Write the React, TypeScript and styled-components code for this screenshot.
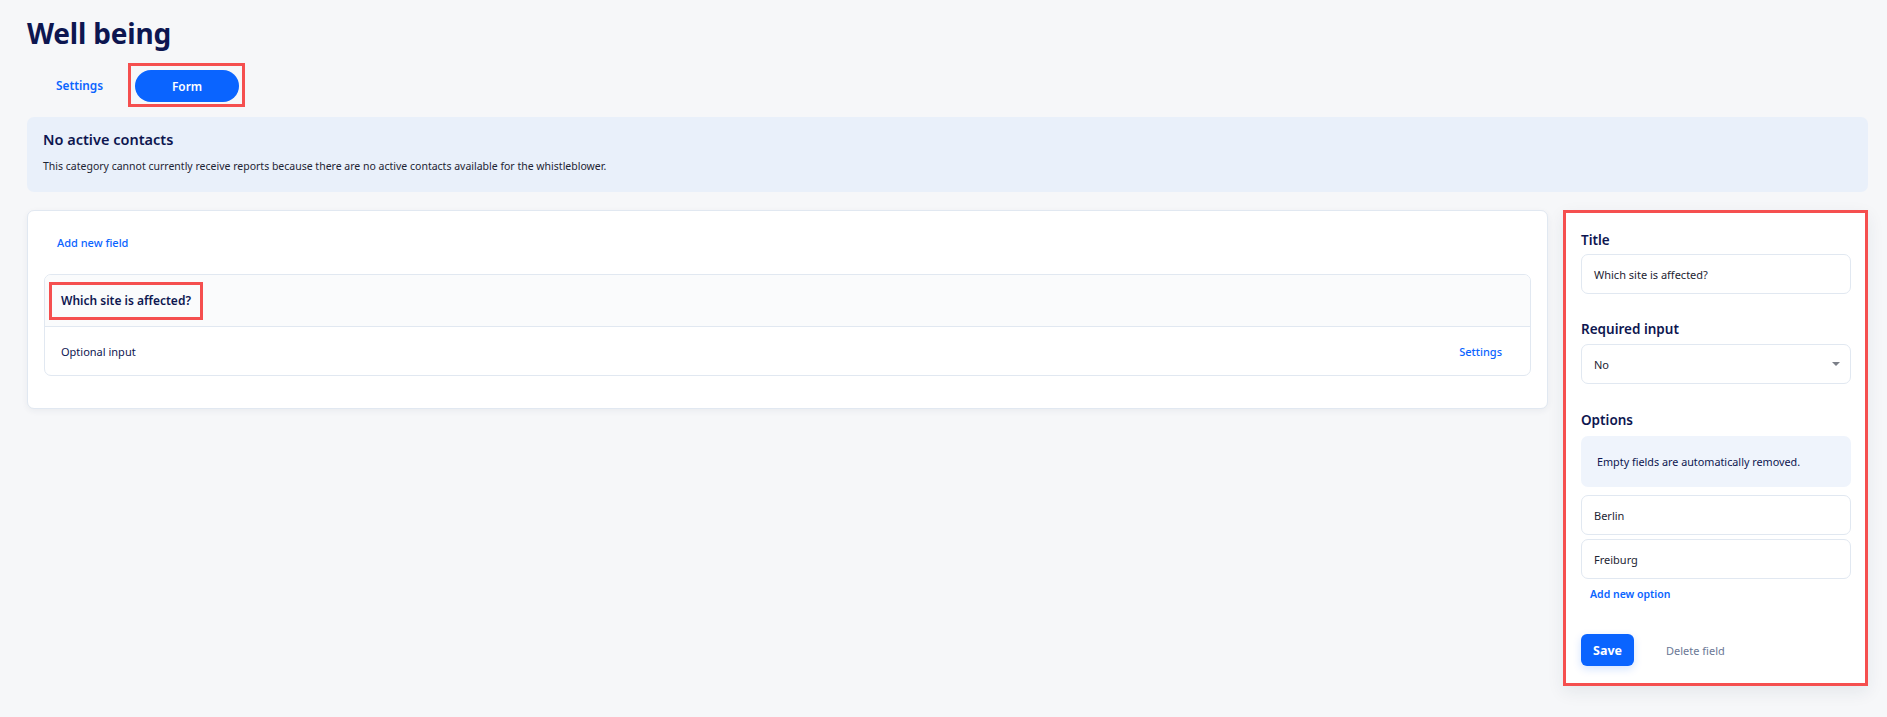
import React from "react";
import styled, { createGlobalStyle } from "styled-components";

const blue = "#0a64ff";
const navy = "#0d1650";
const border = "#e1e8f1";
const red = "#f54f4f";

const GlobalStyle = createGlobalStyle`
  * { box-sizing: border-box; }
  body {
    margin: 0;
    background: #f6f7f9;
    font-family: "Noto Sans", "Open Sans", Arial, sans-serif;
    color: #1d2433;
  }
`;

const Page = styled.div`
  padding: 0 19px 0 27px;
  min-height: 717px;
`;

const Title = styled.h1`
  margin: 15px 0 0;
  font-size: 28px;
  line-height: 36px;
  font-weight: 700;
  color: ${navy};
  letter-spacing: -0.2px;
`;

const Tabs = styled.div`
  display: flex;
  align-items: center;
  margin: 12px 0 0 4px;
`;

const Tab = styled.button<{ $active?: boolean }>`
  height: 32px;
  padding: 0 ${(p) => (p.$active ? "0" : "25px")};
  width: ${(p) => (p.$active ? "104px" : "auto")};
  border: 0;
  border-radius: 16px;
  background: ${(p) => (p.$active ? blue : "transparent")};
  color: ${(p) => (p.$active ? "#fff" : blue)};
  font-family: inherit;
  font-size: 11.8px;
  font-weight: 600;
  cursor: pointer;
`;

const Highlight = styled.span<{ $pad?: string }>`
  display: inline-flex;
  border: 3px solid ${red};
  padding: ${(p) => p.$pad || "4px"};
`;

const Alert = styled.div`
  margin-top: 10px;
  background: #e9f0fa;
  border-radius: 7px;
  padding: 12px 16px 18px;
`;

const AlertTitle = styled.div`
  font-size: 14.5px;
  line-height: 20px;
  font-weight: 600;
  color: ${navy};
`;

const AlertText = styled.div`
  margin-top: 9px;
  font-size: 10.5px;
  line-height: 16px;
  color: #1d2433;
`;

const Content = styled.div`
  display: flex;
  align-items: flex-start;
  gap: 15px;
  margin-top: 18px;
`;

const Card = styled.div`
  flex: 1;
  background: #fff;
  border: 1px solid ${border};
  border-radius: 7px;
  box-shadow: 0 2px 6px rgba(30, 45, 80, 0.06);
  padding: 15px 16px 32px;
`;

const LinkButton = styled.button<{ $size?: number }>`
  border: 0;
  background: none;
  color: ${blue};
  font-family: inherit;
  font-size: ${(p) => p.$size || 11}px;
  font-weight: 500;
  padding: 0 13px;
  height: 32px;
  cursor: pointer;
`;

const FieldBox = styled.div`
  margin-top: 16px;
  border: 1px solid ${border};
  border-radius: 7px;
  overflow: hidden;
`;

const FieldHeader = styled.div`
  background: #fafbfc;
  border-bottom: 1px solid ${border};
  padding: 7px 0 6px 4px;
  display: flex;
`;

const FieldName = styled.span`
  font-size: 12px;
  line-height: 18px;
  font-weight: 600;
  color: ${navy};
  padding: 7px 9px;
`;

const FieldRow = styled.div`
  height: 48px;
  display: flex;
  align-items: center;
  justify-content: space-between;
  padding: 0 15px 0 16px;
  font-size: 11px;
  color: ${navy};
`;

const Panel = styled.div`
  width: 305px;
  background: #fff;
  border: 3px solid ${red};
  box-shadow: 0 6px 16px rgba(30, 45, 80, 0.08);
  padding: 17px 14px 17px 15px;
  display: flex;
  flex-direction: column;
`;

const Label = styled.div<{ $top?: number }>`
  margin-top: ${(p) => p.$top || 0}px;
  font-size: 13.5px;
  line-height: 20px;
  font-weight: 600;
  color: ${navy};
`;

const Input = styled.div<{ $top?: number }>`
  margin-top: ${(p) => p.$top ?? 4}px;
  height: 40px;
  border: 1px solid ${border};
  border-radius: 7px;
  display: flex;
  align-items: center;
  justify-content: space-between;
  padding: 0 12px;
  font-size: 11px;
  color: #1d2433;
`;

const Caret = styled.span`
  width: 0;
  height: 0;
  border-left: 4px solid transparent;
  border-right: 4px solid transparent;
  border-top: 4px solid #7b7f88;
  margin-right: -2px;
`;

const Info = styled.div`
  margin-top: 6px;
  height: 51px;
  background: #eff4fc;
  border-radius: 7px;
  padding: 0 16px;
  display: flex;
  align-items: center;
  font-size: 10.8px;
  color: ${navy};
`;

const AddOption = styled.button`
  align-self: flex-start;
  margin: 7px 0 0 9px;
  border: 0;
  background: none;
  padding: 0;
  font-family: inherit;
  font-size: 10.5px;
  line-height: 16px;
  font-weight: 600;
  color: ${blue};
`;

const Actions = styled.div`
  display: flex;
  align-items: center;
  margin-top: 32px;
  gap: 32px;
`;

const Save = styled.button`
  width: 53px;
  height: 32px;
  border: 0;
  border-radius: 6px;
  background: ${blue};
  color: #fff;
  font-family: inherit;
  font-size: 12.5px;
  font-weight: 700;
  box-shadow: 0 3px 8px rgba(10, 100, 255, 0.18);
`;

const Delete = styled.button`
  border: 0;
  background: none;
  padding: 0;
  font-family: inherit;
  font-size: 11px;
  color: #6b7896;
`;

export default function App() {
  return (
    <Page>
      <GlobalStyle />
      <Title>Well being</Title>
      <Tabs>
        <Tab>Settings</Tab>
        <Highlight $pad="4px 3px 2px 4px">
          <Tab $active>Form</Tab>
        </Highlight>
      </Tabs>
      <Alert>
        <AlertTitle>No active contacts</AlertTitle>
        <AlertText>
          This category cannot currently receive reports because there are no
          active contacts available for the whistleblower.
        </AlertText>
      </Alert>
      <Content>
        <Card>
          <LinkButton>Add new field</LinkButton>
          <FieldBox>
            <FieldHeader>
              <Highlight $pad="0">
                <FieldName>Which site is affected?</FieldName>
              </Highlight>
            </FieldHeader>
            <FieldRow>
              <span>Optional input</span>
              <LinkButton $size={11}>Settings</LinkButton>
            </FieldRow>
          </FieldBox>
        </Card>
        <Panel>
          <Label>Title</Label>
          <Input>Which site is affected?</Input>
          <Label $top={25}>Required input</Label>
          <Input $top={5}>
            <span>No</span>
            <Caret />
          </Input>
          <Label $top={26}>Options</Label>
          <Info>Empty fields are automatically removed.</Info>
          <Input $top={8}>Berlin</Input>
          <Input $top={4}>Freiburg</Input>
          <AddOption>Add new option</AddOption>
          <Actions>
            <Save>Save</Save>
            <Delete>Delete field</Delete>
          </Actions>
        </Panel>
      </Content>
    </Page>
  );
}
